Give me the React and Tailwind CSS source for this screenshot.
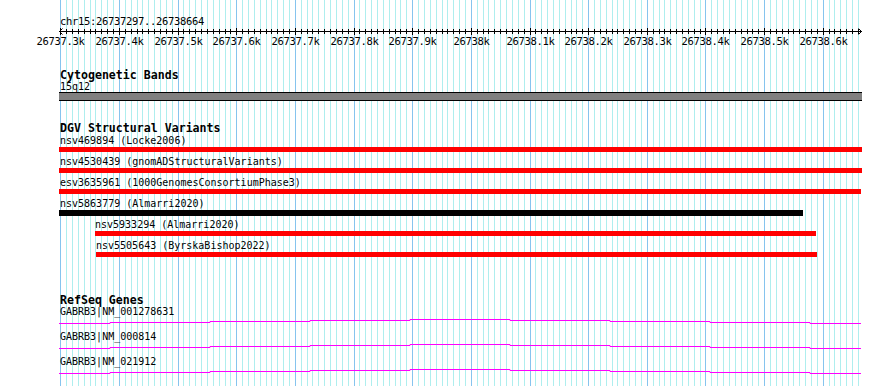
const START = 26737297
const END = 26738664

// genome coordinate -> pixel column
const toX = (bp) => Math.round(60.3 + (bp - 26737300) * 0.5865)

const ticks = []
for (let bp = 26737300; bp <= 26738660; bp += 10) ticks.push(bp)

function Grid() {
  return (
    <svg className="absolute inset-0" width="890" height="386">
      {ticks.map((bp) => (
        <line
          key={bp}
          x1={toX(bp) + 0.5}
          x2={toX(bp) + 0.5}
          y1="0"
          y2="386"
          stroke={bp % 100 === 0 ? '#86c4ee' : '#aeeeee'}
          strokeWidth="1"
        />
      ))}
    </svg>
  )
}

function Ruler() {
  const majors = ticks.filter((bp) => bp % 100 === 0)
  const label = (bp) => {
    const k = (bp / 1000).toFixed(1)
    return (k.endsWith('.0') ? k.slice(0, -2) : k) + 'k'
  }
  return (
    <svg className="block shrink-0" width="890" height="20">
      <line x1="59" x2="862" y1="4.5" y2="4.5" stroke="#000" />
      <polyline points="62.5,1.5 59.5,4.5 62.5,7.5" fill="none" stroke="#000" />
      <polyline points="858.5,1.5 861.5,4.5 858.5,7.5" fill="none" stroke="#000" />
      {ticks.map((bp) => {
        const major = bp % 100 === 0
        return (
          <line
            key={bp}
            x1={toX(bp) + 0.5}
            x2={toX(bp) + 0.5}
            y1={major ? 1 : 2}
            y2={major ? 8 : 7}
            stroke="#000"
          />
        )
      })}
      {majors.map((bp) => (
        <text
          key={bp}
          x={toX(bp) + 0.5}
          y="17.8"
          textAnchor="middle"
          fontFamily="DejaVu Sans Mono, monospace"
          fontSize="10.5"
          letterSpacing="-0.32"
          fill="#000"
        >
          {label(bp)}
        </text>
      ))}
    </svg>
  )
}

const variants = [
  { name: 'nsv469894 (Locke2006)', bar: 'ml-0 w-[803px] h-[5px] bg-[#ff0000]' },
  { name: 'nsv4530439 (gnomADStructuralVariants)', bar: 'ml-0 w-[803px] h-[5px] bg-[#ff0000]' },
  { name: 'esv3635961 (1000GenomesConsortiumPhase3)', bar: 'ml-0 w-[802px] h-[5px] bg-[#ff0000]' },
  { name: 'nsv5863779 (Almarri2020)', bar: 'ml-0 w-[744px] h-[6px] bg-black' },
  { name: 'nsv5933294 (Almarri2020)', bar: 'ml-[36px] w-[721px] h-[5px] bg-[#ff0000]', indent: 'pl-[36px]' },
  { name: 'nsv5505643 (ByrskaBishop2022)', bar: 'ml-[37px] w-[721px] h-[5px] bg-[#ff0000]', indent: 'pl-[37px]' },
]

const genes = ['GABRB3|NM_001278631', 'GABRB3|NM_000814', 'GABRB3|NM_021912']

function GeneLine() {
  const cuts = [59, 110, 210, 310, 410, 510, 610, 710, 810, 861]
  const drop = [4, 3, 2, 1, 0, 1, 2, 3, 4]
  const pts = []
  drop.forEach((d, i) => {
    pts.push(`${cuts[i]},${d + 1.5}`, `${cuts[i + 1]},${d + 1.5}`)
  })
  return (
    <svg className="block shrink-0" width="890" height="13">
      <polyline points={pts.join(' ')} fill="none" stroke="#ff00ff" strokeWidth="1" />
    </svg>
  )
}

function Title({ children, className = '' }) {
  return (
    <div className={`pl-[60px] h-[12px] text-[11.6px] leading-[12px] font-bold ${className}`}>
      {children}
    </div>
  )
}

const small = 'h-[12px] text-[10px] leading-[12px] whitespace-nowrap'

export default function App() {
  return (
    <div className="relative w-[890px] h-[386px] overflow-hidden bg-white text-black font-['DejaVu_Sans_Mono',monospace]">
      <Grid />
      <div className="relative flex flex-col pt-[15px]">
        <div className="pl-[60px] h-[12px] text-[10.5px] tracking-[-0.32px] leading-[12px]">
          chr15:{START}..{END}
        </div>
        <Ruler />

        <Title className="mt-[22px]">Cytogenetic Bands</Title>
        <div className="pl-[60px] h-[11px] text-[10px] leading-[11px]">15q12</div>
        <div className="ml-[59px] w-[803px] h-[9px] border-y border-black bg-[#808080]" />

        <Title className="mt-[21px]">DGV Structural Variants</Title>
        <div className="flex flex-col pt-px pl-[59px]">
          {variants.map((v) => (
            <div key={v.name} className="flex flex-col h-[21px]">
              <div className={`${small} ${v.indent || 'pl-px'}`}>{v.name}</div>
              <div className={v.bar} />
            </div>
          ))}
        </div>

        <Title className="mt-[33px]">RefSeq Genes</Title>
        {genes.map((g) => (
          <div key={g} className="flex flex-col">
            <div className={`pl-[60px] ${small}`}>{g}</div>
            <GeneLine />
          </div>
        ))}
      </div>
    </div>
  )
}
